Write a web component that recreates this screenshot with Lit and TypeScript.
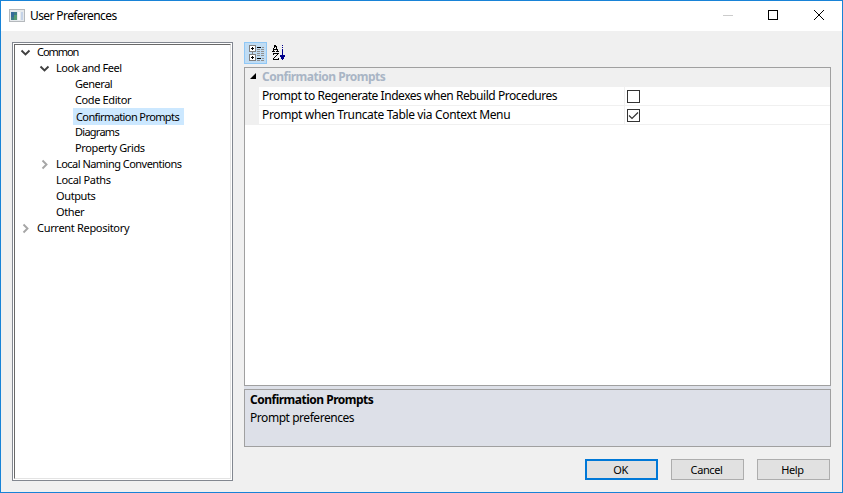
import { LitElement, html, css, svg, nothing } from "lit";
import { customElement } from "lit/decorators.js";

interface Node { label: string; level: number; state?: "open" | "closed"; selected?: boolean; cls: string }

const nodes: Node[] = [
  { label: "Common", level: 0, state: "open", cls: "t0" },
  { label: "Look and Feel", level: 1, state: "open", cls: "t1" },
  { label: "General", level: 2, cls: "t2" },
  { label: "Code Editor", level: 2, cls: "t3" },
  { label: "Confirmation Prompts", level: 2, selected: true, cls: "t4" },
  { label: "Diagrams", level: 2, cls: "t5" },
  { label: "Property Grids", level: 2, cls: "t3" },
  { label: "Local Naming Conventions", level: 1, state: "closed", cls: "t7" },
  { label: "Local Paths", level: 1, cls: "t8" },
  { label: "Outputs", level: 1, cls: "t3" },
  { label: "Other", level: 1, cls: "t3" },
  { label: "Current Repository", level: 0, state: "closed", cls: "t11" },
];

const props = [
  { label: "Prompt to Regenerate Indexes when Rebuild Procedures", on: false },
  { label: "Prompt when Truncate Table via Context Menu", on: true },
];

const chevron = (s?: string) =>
  s === "open"
    ? svg`<path d="M1.5 3.5 L5.5 7.5 L9.5 3.5" fill="none" stroke="#404040" stroke-width="1.9"/>`
    : s === "closed"
    ? svg`<path d="M3.5 1.5 L7.5 5.5 L3.5 9.5" fill="none" stroke="#a6a6a6" stroke-width="1.9"/>`
    : nothing;

@customElement("app-root")
export class AppRoot extends LitElement {
  static styles = css`
    :host { display: block; width: 843px; height: 493px; }
    * { box-sizing: border-box; }
    svg { display: block; flex: none; }
    .window { width: 843px; height: 493px; border: 1px solid #1883d7; background: #f0f0f0; color: #000; display: flex; flex-direction: column; overflow: hidden; font: 12px/16px "Noto Sans", "Open Sans", sans-serif; white-space: nowrap; }
    .titlebar { height: 30px; flex: none; background: #fff; display: flex; align-items: center; padding-left: 8px; }
    .title { margin-left: 5px; flex: 1; letter-spacing: -0.6px; }
    .body { flex: 1; display: flex; padding: 11px 11px 0; gap: 11px; }
    .tree { width: 221px; height: 439px; flex: none; border: 1px solid #828790; padding: 1px; background: #fff; }
    .treeInner { height: 435px; border: 1px solid; border-color: #696969 #e3e3e3 #e3e3e3 #696969; font: 11px/16px "Noto Sans", sans-serif; }
    .node { height: 16px; display: flex; align-items: center; padding-left: 5px; }
    .node:first-child { margin-top: -1px; }
    .l1 { padding-left: 24px; }
    .l2 { padding-left: 43px; }
    .label { margin-left: 6px; }
    .t0 { letter-spacing: -1.05px; }
    .t1 { letter-spacing: -0.43px; }
    .t2 { letter-spacing: -0.48px; }
    .t3 { letter-spacing: -0.38px; }
    .t4 { letter-spacing: -0.6px; }
    .t5 { letter-spacing: -0.74px; }
    .t7 { letter-spacing: -0.53px; }
    .t8 { letter-spacing: -0.34px; }
    .t11 { letter-spacing: -0.31px; }
    .sel .label { background: #cce8ff; height: 17px; line-height: 17px; margin: 1px 0 0 4px; padding: 0 3px; width: 111px; }
    .main { width: 587px; display: flex; flex-direction: column; }
    .tools { height: 22px; display: flex; margin-bottom: 3px; }
    .tool { width: 23px; height: 22px; display: grid; place-items: center; }
    .active { background: #c0dcf3; border: 1px solid #90c8f6; }
    .gridWrap { background: #dde0e8; }
    .grid { height: 319px; border: 1px solid #a0a0a0; background: #fff; }
    .category { height: 19px; background: #f0f0f0; display: flex; align-items: center; color: #a9b5c5; font-weight: 700; line-height: 17px; padding-bottom: 2px; }
    .cat { letter-spacing: -0.5px; }
    .arrow { margin: 0 4px 0 4px; }
    .prop { height: 19px; display: flex; border-left: 14px solid #f0f0f0; }
    .name { width: 366px; border-right: 1px solid #f0f0f0; border-bottom: 1px solid #f0f0f0; padding-left: 3px; line-height: 18px; }
    .p0 { letter-spacing: -0.46px; }
    .p1 { letter-spacing: -0.35px; }
    .value { flex: 1; border-bottom: 1px solid #f0f0f0; padding: 3px 0 0 2px; }
    .check { width: 13px; height: 13px; border: 1px solid #333; background: #fff; }
    .desc { height: 58px; margin-top: 3px; border: 1px solid #a0a0a0; background: #dde0e8; padding: 1px 5px; line-height: 18px; }
    .strong { font-weight: 700; }
    .pref { letter-spacing: -0.45px; }
    .buttons { display: flex; justify-content: flex-end; gap: 13px; padding: 12px 1px 0 0; }
    .btn { width: 73px; height: 21px; padding: 0 2px 0 0; border: 1px solid #adadad; background: #e1e1e1; color: #000; font: 11px/19px "Noto Sans", sans-serif; letter-spacing: -0.4px; text-align: center; }
    .primary { border: 2px solid #0078d7; line-height: 17px; }
  `;

  render() {
    return html`
      <div class="window">
        <div class="titlebar">
          <svg width="16" height="14" viewBox="0 0 16 14" shape-rendering="crispEdges">
            <path d="M0 0h16v13h-16z" fill="#b5b9bd"/><path d="M1 1h14v11h-14z" fill="#e6eaed"/>
            <path d="M2 3h6v8h-6z" fill="#3c7d86"/><path d="M2 3h3v5h-3z" fill="#356b9b"/><path d="M5 6h3v5h-3z" fill="#559b72"/>
            <path d="M9 3h2v8h-2z" fill="#fafafa"/><path d="M12 3h2v8h-2z" fill="#c5d3e8"/>
          </svg>
          <span class="title">User Preferences</span>
          <svg width="119" height="30" viewBox="0 0 119 30" shape-rendering="crispEdges">
            <path d="M0 14.5h10" stroke="#ccc"/>
            <rect x="45.5" y="9.5" width="9" height="9" fill="none" stroke="#000"/>
            <path d="M91 9l10 10M101 9l-10 10" stroke="#000" shape-rendering="auto"/>
          </svg>
        </div>
        <div class="body">
          <div class="tree"><div class="treeInner">
            ${nodes.map(n => html`<div class="node l${n.level} ${n.selected ? "sel" : ""}">
              <svg width="11" height="11" viewBox="0 0 11 11">${chevron(n.state)}</svg>
              <span class="label ${n.cls}">${n.label}</span></div>`)}
          </div></div>
          <div class="main">
            <div class="tools">
              <div class="tool active">
                <svg width="17" height="16" viewBox="0 0 17 16" shape-rendering="crispEdges">
                  <path d="M2.5 0.5h6v6h-6zM2.5 9.5h6v6h-6z" fill="#fff" stroke="#808080"/>
                  <path d="M5.5 7v2" stroke="#808080"/>
                  <path d="M4 3.5h3M5.5 2v3M4 12.5h3M5.5 11v3M10 2.5h4M10 13.5h4" stroke="#000"/>
                  <path d="M10 4.5h3m1 0h3M10 6.5h3m1 0h3M10 8.5h3m1 0h3M10 10.5h3m1 0h3M15 2.5h2M15 13.5h2M10 15.5h3m1 0h3" stroke="#909090"/>
                </svg>
              </div>
              <div class="tool">
                <svg width="17" height="16" viewBox="0 0 17 16" shape-rendering="crispEdges">
                  <path d="M4 0.5h2M4 1.5h3M4 2.5h1m1 0h1M3 3.5h1m2 0h1M3 4.5h5M3 5.5h1m3 0h1M2 6.5h3m1 0h3M3 8.5h6M3 9.5h1m3 0h1M6 10.5h1M5 11.5h1M4 12.5h1M3 13.5h1m4 0h1M3 14.5h6" stroke="#000"/>
                  <path d="M12.5 0v1m0 1v1m0 1v11M10 10.5h5M10 11.5h5M11 12.5h3M11 13.5h3" stroke="#00008b"/>
                </svg>
              </div>
            </div>
            <div class="gridWrap">
              <div class="grid">
                <div class="category"><svg class="arrow" width="9" height="7" viewBox="0 0 9 7"><path d="M7 0v6H1z" fill="#000"/></svg><span class="cat">Confirmation Prompts</span></div>
                ${props.map((p, i) => html`<div class="prop"><div class="name p${i}">${p.label}</div><div class="value">
                  <div class="check">${p.on ? html`<svg width="11" height="11" viewBox="0 0 11 11"><path d="M1 5.5L4 8.5L10 2.5" fill="none" stroke="#333" stroke-width="1.2"/></svg>` : nothing}</div></div></div>`)}
              </div>
              <div class="desc"><div class="strong"><span class="cat">Confirmation Prompts</span></div><div class="pref">Prompt preferences</div></div>
            </div>
            <div class="buttons">
              <button class="btn primary">OK</button><button class="btn">Cancel</button><button class="btn">Help</button>
            </div>
          </div>
        </div>
      </div>`;
  }
}
